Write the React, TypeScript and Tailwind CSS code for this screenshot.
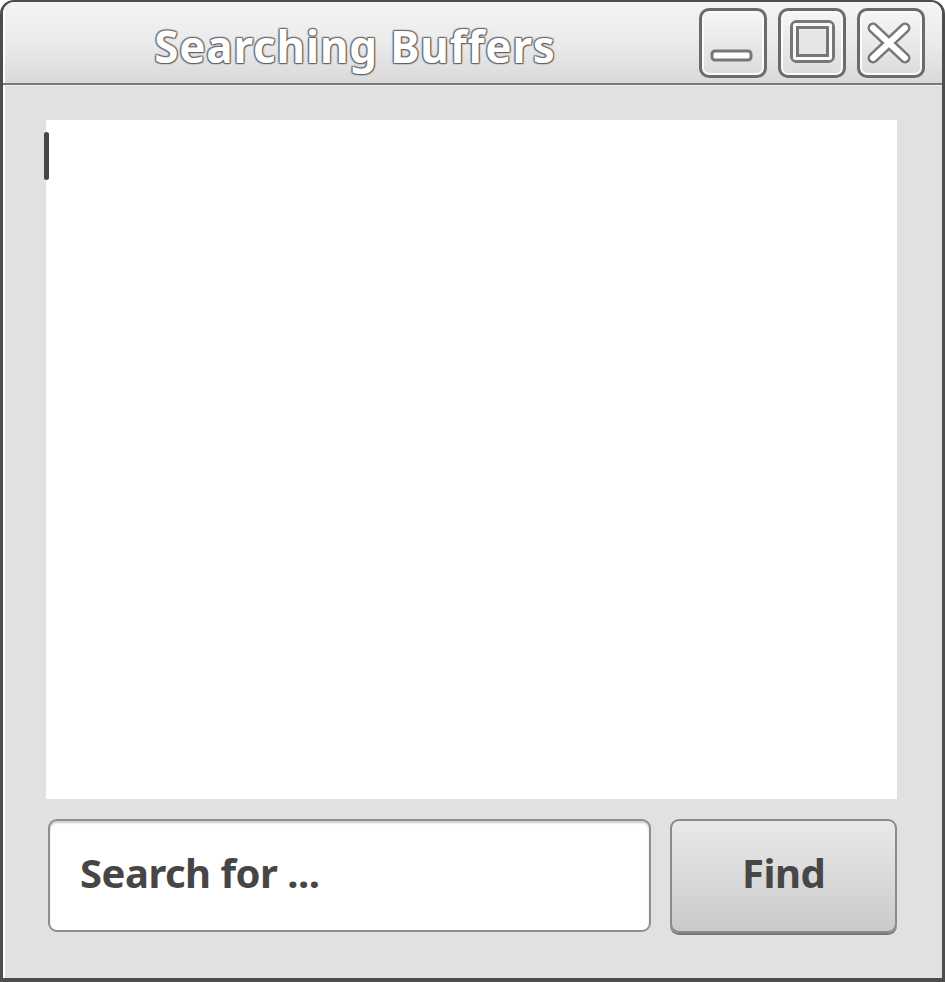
import React from "react";

const FONT = { fontFamily: '"Noto Sans", "Open Sans", sans-serif' };

const TitleButton: React.FC<{ children: React.ReactNode }> = ({ children }) => (
  <div className="w-[68px] h-[70px] rounded-[10px] border-[3px] border-[#6b6b6b] bg-gradient-to-b from-[#f6f6f6] to-[#dcdcdc] shadow-[inset_0_0_0_2px_#fafafa] flex items-center justify-center">
    <svg width="62" height="64" viewBox="0 0 62 64">
      {children}
    </svg>
  </div>
);

export default function App() {
  return (
    <div
      className="w-[945px] h-[982px] bg-[#e1e1e1] border-x-[3px] border-b-[4px] border-t-[2px] border-[#4d4d4d] rounded-t-[14px] flex flex-col overflow-hidden"
      style={FONT}
    >
      {/* title bar */}
      <div className="h-[83px] flex items-center bg-gradient-to-b from-[#f4f4f4] via-[#ebebeb] to-[#d9d9d9] border-b-[2px] border-[#7a7a7a] pr-[17px] shadow-[inset_2px_0_0_#ffffff]">
        <div className="flex-1 flex justify-center pl-[8px] pt-[6px]">
          <span className="text-[44px] font-bold text-white tracking-[0.8px] [text-shadow:0_0_2px_#555,1px_1px_1px_#666,-1px_-1px_1px_#777,1px_-1px_1px_#777,-1px_1px_1px_#777]">
            Searching Buffers
          </span>
        </div>
        <div className="flex gap-[11px] mt-[1px]">
          <TitleButton>
            <rect x="10" y="40" width="39" height="9" rx="3" fill="#fff" stroke="#777" strokeWidth="3" />
          </TitleButton>
          <TitleButton>
            <rect x="13.5" y="13.5" width="36" height="34" rx="2" fill="none" stroke="#777" strokeWidth="9" />
            <rect x="13.5" y="13.5" width="36" height="34" rx="1" fill="none" stroke="#fafafa" strokeWidth="3" />
            <rect x="19" y="19" width="25" height="23" fill="#e6e6e6" />
          </TitleButton>
          <TitleButton>
            <path d="M13 17 L45 47 M45 17 L13 47" stroke="#777" strokeWidth="11" strokeLinecap="round" />
            <path d="M13 17 L45 47 M45 17 L13 47" stroke="#fff" strokeWidth="6" strokeLinecap="round" />
          </TitleButton>
        </div>
      </div>
      <div className="h-[1px] bg-[#f2f2f2]" />

      {/* body */}
      <div className="flex-1 flex flex-col pl-[43px] pr-[45px] pt-[34px] pb-[43px] shadow-[inset_2px_0_0_#ffffff]">
        <div className="relative h-[679px] bg-white">
          <div className="absolute left-[-2px] top-[12px] w-[5px] h-[48px] rounded-full bg-[#454545]" />
        </div>
        <div className="flex gap-[19px] mt-[20px] pl-[2px]">
          <div className="w-[604px] h-[113px] rounded-[9px] border-[2px] border-[#8f8f8f] bg-white shadow-[inset_0_2px_2px_#cfcfcf] flex items-center pl-[30px] pb-[6px]">
            <span className="text-[40px] font-bold text-[#464646] tracking-[-0.5px]">Search for ...</span>
          </div>
          <div className="w-[227px] h-[114px] rounded-[9px] border-[2px] border-[#8a8a8a] bg-gradient-to-b from-[#e9e9e9] via-[#dadada] to-[#c9c9c9] shadow-[0_2px_0_#777] flex items-center justify-center pb-[6px]">
            <span className="text-[40px] font-bold text-[#464646] tracking-[-0.5px]">Find</span>
          </div>
        </div>
      </div>
    </div>
  );
}
